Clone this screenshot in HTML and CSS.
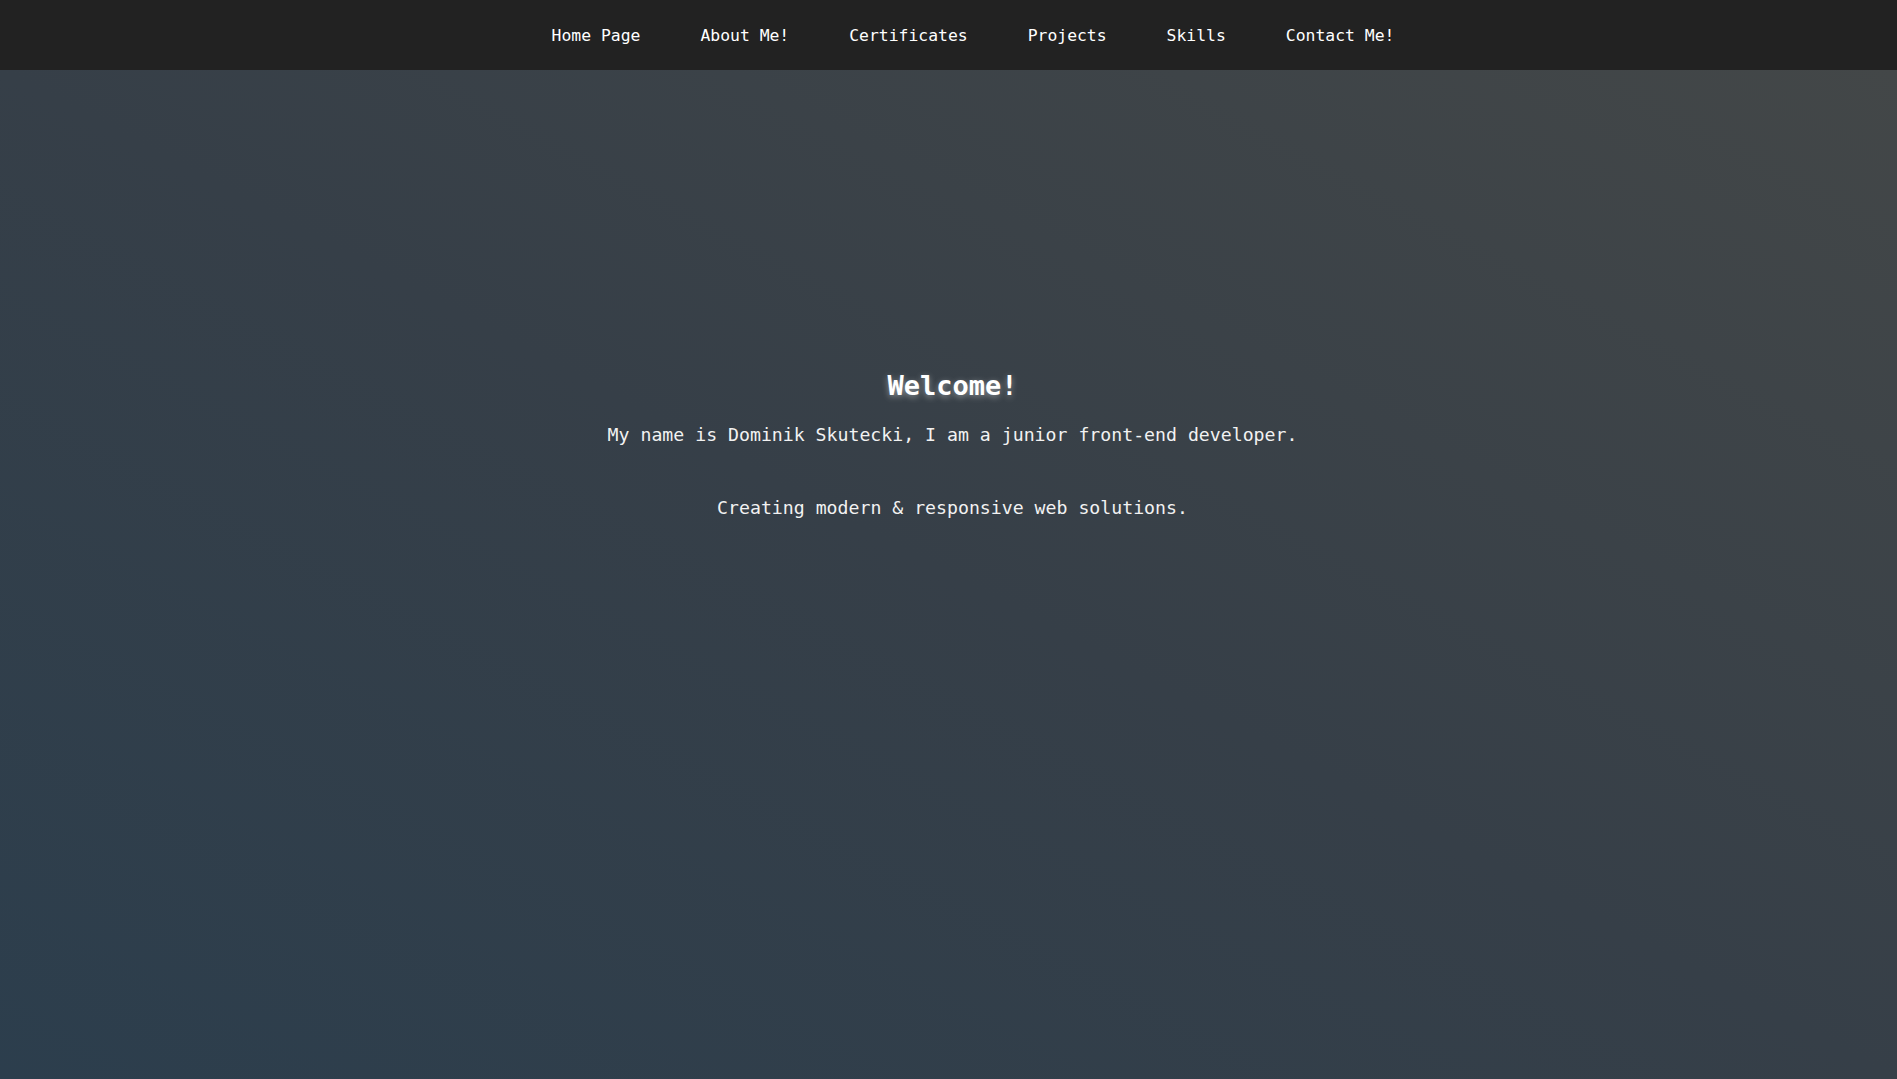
FILE: index.html
```html
<!DOCTYPE html>
<html lang="en">
<head>
<meta charset="utf-8">
<title>Dominik Skutecki</title>
<link rel="stylesheet" href="styles.css">
</head>
<body>
<nav class="topnav">
  <ul class="menu">
    <li><a href="#">Home Page</a></li>
    <li><a href="#">About Me!</a></li>
    <li><a href="#">Certificates</a></li>
    <li><a href="#">Projects</a></li>
    <li><a href="#">Skills</a></li>
    <li><a href="#">Contact Me!</a></li>
  </ul>
</nav>
<main class="hero">
  <h1 class="hero-title">Welcome!</h1>
  <p class="hero-intro">My name is Dominik Skutecki, I am a junior front-end developer.</p>
  <p class="hero-tagline">Creating modern &amp; responsive web solutions.</p>
</main>
</body>
</html>
```
FILE: styles.css
```css
html, body {
  margin: 0;
  padding: 0;
  height: 100%;
}
body {
  font-family: "DejaVu Sans Mono", "Liberation Mono", monospace;
  background: #222222;
  color: #ffffff;
  display: flex;
  flex-direction: column;
}
.topnav {
  height: 70px;
  background: #222222;
  display: flex;
  align-items: center;
  justify-content: center;
  flex-shrink: 0;
}
.menu {
  list-style: none;
  margin: 0;
  padding: 0 0 0 49px;
  display: flex;
  gap: 60px;
}
.menu a {
  color: #ffffff;
  text-decoration: none;
  font-size: 16.4px;
  line-height: 20px;
  display: block;
  position: relative;
  top: 1px;
}
.hero {
  flex: 1;
  background: linear-gradient(to top right, #2c3e4d 0%, #363f48 50%, #434748 100%);
  padding: 300px 0 0 8px;
  text-align: center;
}
.hero-title {
  margin: 0;
  font-size: 27px;
  line-height: 32px;
  font-weight: bold;
  color: #ffffff;
  text-shadow: 0 2px 6px rgba(255, 255, 255, 0.45);
}
.hero-intro {
  margin: 22px 0 0;
  font-size: 18.2px;
  line-height: 22px;
  color: #f2f2f2;
}
.hero-tagline {
  margin: 51px 0 0;
  font-size: 18.2px;
  line-height: 22px;
  color: #f2f2f2;
}
```
